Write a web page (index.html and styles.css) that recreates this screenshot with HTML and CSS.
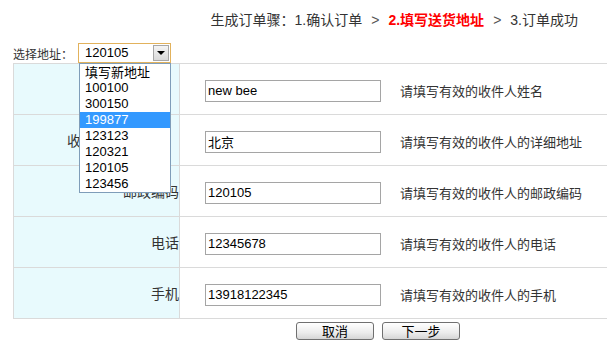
FILE: index.html
```html
<!DOCTYPE html>
<html>
<head>
    <meta charset="utf-8">
    <title>填写送货地址</title>
    <link rel="stylesheet" href="styles.css">
</head>
<body>
    <div class="steps">
        生成订单骤：1.确认订单<span class="sep">&gt;</span><span class="current">2.填写送货地址</span><span class="sep">&gt;</span>3.订单成功
    </div>

    <div class="choose">
        <label>选择地址：</label>
        <div class="select">
            <span class="value">120105</span>
            <span class="select-btn"><span class="tri"></span></span>
            <!-- dropdown is open -->
            <ul class="options">
                <li class="cn">填写新地址</li>
                <li>100100</li>
                <li>300150</li>
                <li class="selected">199877</li>
                <li>123123</li>
                <li>120321</li>
                <li>120105</li>
                <li>123456</li>
            </ul>
        </div>
    </div>

    <table class="addr-table">
        <tr>
            <td class="label indent">收件人姓名</td>
            <td class="field"><input type="text" value="new bee"><span class="hint">请填写有效的收件人姓名</span></td>
        </tr>
        <tr>
            <td class="label indent">收件人详细地址</td>
            <td class="field"><input type="text" value="北京"><span class="hint">请填写有效的收件人的详细地址</span></td>
        </tr>
        <tr>
            <td class="label">邮政编码</td>
            <td class="field"><input type="text" value="120105"><span class="hint">请填写有效的收件人的邮政编码</span></td>
        </tr>
        <tr>
            <td class="label">电话</td>
            <td class="field"><input type="text" value="12345678"><span class="hint">请填写有效的收件人的电话</span></td>
        </tr>
        <tr>
            <td class="label">手机</td>
            <td class="field"><input type="text" value="13918122345"><span class="hint">请填写有效的收件人的手机</span></td>
        </tr>
    </table>

    <div class="actions">
        <button type="button">取消</button>
        <button type="button">下一步</button>
    </div>
</body>
</html>
```

FILE: styles.css
```css
body {
    margin: 0;
    font-family: "Liberation Sans", "Noto Sans CJK SC", sans-serif;
    font-size: 13px;
    color: #333;
    background: #fff;
    overflow: hidden;
}
.steps {
    height: 26px;
    padding: 10px 29px 0 0;
    line-height: 20px;
    font-size: 14px;
    text-align: right;
    color: #333;
}
.steps .sep {
    margin: 0 9px;
    color: #555;
}
.steps .current {
    color: #f00;
    font-weight: bold;
}
.choose {
    display: flex;
    align-items: center;
    height: 20px;
    margin-top: 7px;
    padding-left: 13px;
    font-size: 12px;
}
.choose label {
    width: 65px;
    font-family: "Noto Sans CJK SC", sans-serif;
}
.select {
    position: relative;
    width: 91px;
    height: 18px;
    border: 1px solid #e2b25c;
    background: #fff;
}
.select .value {
    display: block;
    padding-left: 6px;
    line-height: 18px;
    font-size: 13px;
    color: #000;
}
.select-btn {
    position: absolute;
    right: 1px;
    top: 1px;
    width: 14px;
    height: 14px;
    border: 1px solid #a7a7a7;
    background: linear-gradient(#f4f4f4, #d9d9d9);
}
.select-btn .tri {
    position: absolute;
    left: 3px;
    top: 5px;
    border-left: 4px solid transparent;
    border-right: 4px solid transparent;
    border-top: 4px solid #000;
}
.options {
    position: absolute;
    left: 0;
    top: 19px;
    width: 90px;
    margin: 0;
    padding: 0;
    list-style: none;
    border: 1px solid #7f9db9;
    background: #fff;
    z-index: 10;
}
.options li {
    height: 16px;
    line-height: 16px;
    padding-left: 5px;
    font-size: 13px;
    color: #000;
}
.options li.cn {
    font-family: "Noto Sans CJK SC", sans-serif;
}
.options li.selected {
    background: #3399ff;
    color: #fff;
}
.addr-table {
    margin-left: 13px;
    width: 600px;
    border-collapse: collapse;
    table-layout: fixed;
}
.addr-table td {
    height: 50px;
    padding: 0;
    border: 1px solid #dadada;
    line-height: 20px;
}
.addr-table td.label {
    box-sizing: border-box;
    width: 166px;
    background: #e8fafd;
    text-align: right;
    font-size: 14px;
    font-family: "Noto Sans CJK SC", sans-serif;
    color: #333;
}
.addr-table td.indent {
    padding-right: 14px;
}
.addr-table td.field {
    height: 47px;
    padding: 3px 0 0 25px;
    border-right: none;
}
.addr-table input {
    box-sizing: border-box;
    width: 176px;
    height: 22px;
    padding: 0 2px;
    border: 1px solid #a5a5a5;
    font-family: "Liberation Sans", "Noto Sans CJK SC", sans-serif;
    font-size: 13px;
    color: #000;
    vertical-align: middle;
}
.hint {
    margin-left: 19px;
    font-size: 13px;
    font-family: "Noto Sans CJK SC", sans-serif;
    color: #333;
    vertical-align: middle;
}
.actions {
    padding: 3px 0 0 296px;
    display: flex;
    gap: 8px;
}
.actions button {
    width: 78px;
    height: 18px;
    padding: 0;
    border: 1px solid #707070;
    border-radius: 3px;
    background: linear-gradient(#ffffff, #ececec 60%, #d6d6d6);
    font-family: "Noto Sans CJK SC", sans-serif;
    font-size: 13px;
    line-height: 16px;
    color: #000;
}
```
